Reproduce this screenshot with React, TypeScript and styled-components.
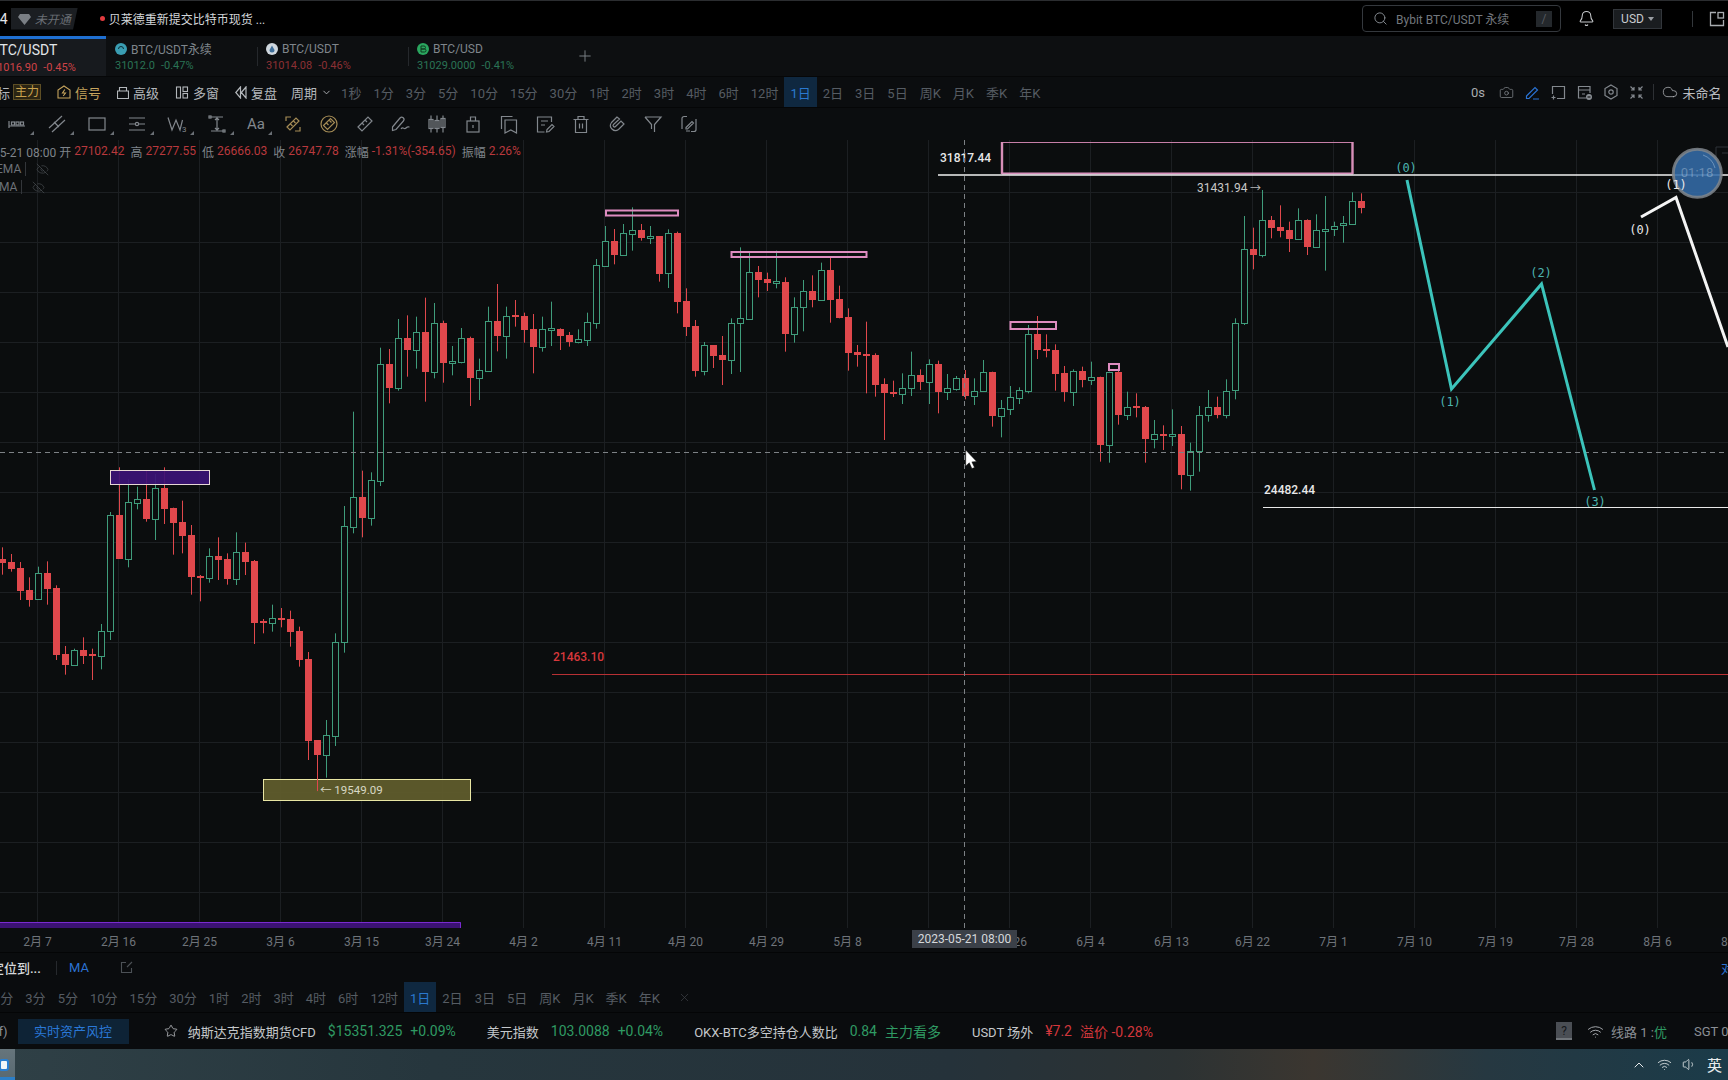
import React, { FC, ReactNode } from 'react'
import styled, { createGlobalStyle } from 'styled-components'
import { Bell, Camera, ChevronDown, ChevronUp, Cloud, EyeOff, Plus, Search, Star, Volume1, Wifi, X } from 'lucide-react'

const FONT = `Roboto, "Noto Sans CJK SC", sans-serif`
const RED = '#e0484c'
const GREEN = '#3f9c7b'
const PANEL = '#0b0d0f'

// candle rows are read off the chart: dir, wick high, body top, body bottom, wick low
// each set keeps the units of its own crop, so y = origin + v / 3
const SETS: { origin: number; rows: string }[] = [
  {
    origin: 440,
    rows: `r 322 357 369 404|r 342 367 387 395|r 366 385 453 480|r 412 451 480 500|g 380 400 478 478|r 364 400 446 494|r 436 445 645 660|r 618 643 675 704|g 626 631 675 675|r 592 631 648 672|r 626 643 648 720|g 552 574 647 688|g 216 226 574 600|r 82 226 357 357|g 118 187 356 382|g 140 178 188 208|r 92 178 237 245|g 102 145 236 300|r 82 145 207 252|r 203 204 249 344|r 182 247 288 340|r 255 286 411 464|r 405 408 414 484|g 325 349 413 428|r 292 349 360 420|r 340 358 417 434|g 277 337 416 435|r 308 337 366 405|r 360 364 548 612|r 537 543 549 580|g 494 535 548 575|r 504 535 539 562|r 512 537 576 620|r 560 574 660 680|r 636 657 903 960|r 900 900 945 1055|g 840 886 945 1013|g 580 607 887 918|g 198 259 607 638|g -85 172 260 280|r 92 172 234 292|g 97 121 233 257`,
  },
  {
    origin: 190,
    rows: `g 473 523 872 888|r 477 522 594 640|g 387 445 594 602|r 376 445 480 560|g 380 427 480 536|r 323 427 546 635|g 339 400 546 565|r 392 400 519 578|g 468 514 518 556|g 414 445 516 520|r 440 445 564 648|g 506 541 564 630|g 350 393 543 545|r 282 393 438 484|g 350 379 438 506|r 330 375 381 410|r 368 379 420 458|r 372 418 471 550|g 380 418 471 485|g 335 415 419 468|r 415 418 438 480|r 426 435 456 470|g 418 448 456 460|g 368 396 449 468|g 207 226 399 416|g 108 154 228 228|r 117 154 195 223|g 102 130 195 196|g 52 121 131 182|r 102 120 144 152|g 108 139 144 162|r 138 139 252 275|g 118 130 250 294|r 125 130 336 370|r 295 334 411 438|r 390 408 543 560|g 456 466 543 556|r 465 466 498 534|r 438 495 510 585|g 385 400 510 552|g 172 385 400 546|g 185 247 386 386|r 228 247 270 322|r 248 267 278 303|g 182 273 278 295|r 262 277 432 485|g 322 352 431 458|g 270 304 352 424|r 256 304 330 352`,
  },
  {
    origin: 230,
    rows: `g 98 121 210 212|r 80 121 210 278|r 167 208 264 265`,
  },
  {
    origin: 300,
    rows: `r 25 52 158 212|r 135 157 164 200|r 65 162 167 280|r 160 165 255 290|r 235 252 279 420|r 242 277 282 291|g 220 263 282 312|g 155 226 263 288|r 208 226 246 270|g 178 193 245 312|r 182 193 276 340|g 222 265 275 300|g 228 235 266 272|r 210 235 288 298|g 235 272 288 315|g 180 217 272 275|r 215 217 348 380|g 300 325 348 412|g 258 292 326 345|g 262 271 293 312|g 75 103 272 280|r 48 103 150 177|r 103 148 153 172|r 133 151 221 272|r 198 219 276 305|g 208 214 275 318|r 200 213 240 262|g 185 232 239 255|r 230 232 435 485|g 215 217 434 488|r 190 217 345 374|g 275 320 344 360|r 280 319 323 352|r 318 322 417 488|g 360 403 416 445|r 376 403 408 450|g 328 403 407 438|r 378 403 525 568|g 428 452 524 572|g 318 344 452 515|g 270 320 344 365|r 290 320 344 355|g 238 272 344 355|g 55 70 271 298`,
  },
  {
    origin: 130,
    rows: `g 258 358 580 585|r 293 357 375 418|g 180 271 374 382|r 258 271 294 325|r 226 291 302 322|r 275 301 326 366|g 235 271 326 326|r 268 271 350 375|g 253 301 350 350|g 198 298 301 422|g 275 287 298 318|g 258 280 286 338|g 187 214 281 285|r 190 214 233 250`,
  },
]

const CANDLES = SETS.flatMap(({ origin, rows }) =>
  rows.split('|').map(row => {
    const [dir, ...vals] = row.split(' ')
    const [high, top, bottom, low] = vals.map(v => origin + Number(v) / 3)
    return { up: dir === 'g', high, top, bottom, low }
  })
)

const GRID_X = Array.from({ length: 21 }, (_, i) => 37.5 + i * 81)
const GRID_Y = Array.from({ length: 15 }, (_, i) => 192.5 + i * 50)

// the 5月 17 slot stays empty, the crosshair tag sits on it
const AXIS = ['2月 7', '2月 16', '2月 25', '3月 6', '3月 15', '3月 24', '4月 2', '4月 11', '4月 20', '4月 29', '5月 8', '', '5月 26', '6月 4', '6月 13', '6月 22', '7月 1', '7月 10', '7月 19', '7月 28', '8月 6', '8月 15']
const PERIODS = ['1分', '3分', '5分', '10分', '15分', '30分', '1时', '2时', '3时', '4时', '6时', '12时', '1日', '2日', '3日', '5日', '周K', '月K', '季K', '年K']

const GlobalStyle = createGlobalStyle`
  html, body {
    margin: 0;
    background: #000;
    overflow: hidden;
  }
`

const Page = styled.div`
  display: flex;
  flex-direction: column;
  width: 1728px;
  height: 1080px;
  overflow: hidden;
  background: ${PANEL};
  color: #9a9fa5;
  font-family: ${FONT};
  font-size: 13px;
`

const TopBar = styled.header`
  flex: 0 0 36px;
  box-sizing: border-box;
  display: flex;
  align-items: center;
  background: #000;
  border-top: 1px solid #2b2d30;
`

const Clipped = styled.span`
  margin-left: -8px;
  color: #e4e6e8;
  font-size: 14px;
`

const Membership = styled.div`
  display: flex;
  align-items: center;
  gap: 4px;
  margin-left: 3px;
  width: 67px;
  height: 22px;
  box-sizing: border-box;
  padding-left: 7px;
  background: #1b1e22;
  clip-path: polygon(0 0, 100% 0, 93% 100%, 0 100%);
  color: #6a6f75;
  font-style: italic;
  font-size: 12px;
`

const NewsDot = styled.i`
  width: 5px;
  height: 5px;
  margin-left: 22px;
  border-radius: 50%;
  background: #e23b3f;
`

const News = styled.span`
  margin-left: 4px;
  color: #d3d6d9;
  font-size: 12px;
`

const SearchBox = styled.div`
  display: flex;
  align-items: center;
  gap: 8px;
  box-sizing: border-box;
  width: 199px;
  height: 27px;
  margin-left: auto;
  padding: 0 8px 0 10px;
  border: 1px solid #34383d;
  border-radius: 4px;
  color: #72777d;
  font-size: 12px;
  svg { color: #8a8f95; }
`

const Kbd = styled.span`
  margin-left: auto;
  width: 16px;
  height: 16px;
  background: #24282c;
  color: #555a60;
  text-align: center;
  line-height: 16px;
`

const BellWrap = styled.span`
  display: flex;
  margin-left: 17px;
  color: #c5c8cb;
`

const Currency = styled.div`
  display: flex;
  align-items: center;
  justify-content: center;
  gap: 4px;
  width: 49px;
  height: 20px;
  box-sizing: border-box;
  margin-left: 18px;
  background: #1a1d20;
  border: 1px solid #32363b;
  color: #c8cbce;
  font-size: 12px;
  &::after {
    content: '';
    border: 3.5px solid transparent;
    border-top: 4px solid #9a9ea3;
    border-bottom: 0;
  }
`

const TopDivider = styled.i`
  width: 1px;
  height: 16px;
  margin-left: 30px;
  background: #33373b;
`

const LayoutMark = styled.svg`
  flex: none;
  margin: 0 3px 0 16px;
  color: #a8acb0;
`

const TabBar = styled.nav`
  flex: 0 0 41px;
  display: flex;
  background: #0d0f11;
  border-bottom: 1px solid #060708;
  box-sizing: border-box;
`

const Tab = styled.div<{ $active?: boolean }>`
  position: relative;
  box-sizing: border-box;
  flex: none;
  width: ${({ $active }) => ($active ? '115px' : '151px')};
  margin-left: ${({ $active }) => ($active ? '-9px' : '0')};
  padding: ${({ $active }) => ($active ? '3px 0 0 0' : '5px 0 0 9px')};
  background: ${({ $active }) => ($active ? '#171a1e' : 'transparent')};
  border-top: ${({ $active }) => ($active ? '3px solid #1f6fd0' : '0')};
  &:not(:first-child)::before {
    content: '';
    position: absolute;
    left: 0;
    top: 11px;
    height: 19px;
    width: 1px;
    background: #25282c;
  }
  &:nth-child(2)::before {
    display: none;
  }
`

const TabName = styled.div<{ $active?: boolean }>`
  display: flex;
  align-items: center;
  gap: 4px;
  height: 15px;
  color: ${({ $active }) => ($active ? '#e2e5e8' : '#7f858b')};
  font-size: ${({ $active }) => ($active ? '14px' : '12px')};
`

const TabQuote = styled.div<{ $up?: boolean; $active?: boolean }>`
  display: flex;
  gap: 6px;
  margin-top: ${({ $active }) => ($active ? '4px' : '3px')};
  color: ${({ $up, $active }) => ($active ? '#cf4347' : $up ? '#2a7355' : '#8c3034')};
  font-size: 11px;
`

const AddTab = styled.span`
  display: flex;
  align-items: center;
  margin-left: 17px;
  color: #7a7f85;
`

const PeriodBar = styled.div`
  flex: 0 0 31px;
  box-sizing: border-box;
  display: flex;
  align-items: center;
  gap: 16px;
  background: #0b0d0f;
  border-bottom: 1px solid #050607;
`

const IndicatorLabel = styled.span`
  margin: 0 -13px 0 -16px;
  color: #b3b7bb;
`

const Badge = styled.span`
  box-sizing: border-box;
  width: 28px;
  height: 16px;
  background: #2b2513;
  border: 1px solid #5d4e24;
  color: #c9a24e;
  font-size: 12px;
  line-height: 14px;
  text-align: center;
`

const BarLink = styled.span<{ $gold?: boolean; $tight?: boolean }>`
  display: flex;
  align-items: center;
  gap: 4px;
  margin-left: ${({ $tight }) => ($tight ? '-2px' : '0')};
  color: ${({ $gold }) => ($gold ? '#c7a55d' : '#b3b7bb')};
  white-space: nowrap;
`

const PeriodList = styled.div<{ $offset: number }>`
  display: flex;
  align-items: center;
  height: 100%;
  margin-left: ${({ $offset }) => $offset}px;
`

const Period = styled.span<{ $active?: boolean }>`
  display: flex;
  align-items: center;
  height: 100%;
  padding: 0 6px;
  color: ${({ $active }) => ($active ? '#2a79cf' : '#565c63')};
  background: ${({ $active }) => ($active ? '#0f2840' : 'transparent')};
  white-space: nowrap;
`

const BarRight = styled.div`
  display: flex;
  align-items: center;
  margin-left: auto;
  color: #8a8f95;
  flex: none;
  width: 257px;
  height: 100%;
`

const Elapsed = styled.span`
  flex: none;
  width: 22.5px;
  color: #a8acb0;
`

const RightIcon = styled.span<{ $active?: boolean }>`
  flex: 0 0 26px;
  display: flex;
  justify-content: center;
  color: ${({ $active }) => ($active ? '#2a72d2' : '#83888e')};
`

const RightDivider = styled.i`
  flex: none;
  width: 1px;
  height: 16px;
  margin: 0 8px 0 3px;
  background: #2d3034;
`

const Workspace = styled.span`
  display: flex;
  align-items: center;
  gap: 5px;
  color: #b9bcc0;
  white-space: nowrap;
`

const ToolBar = styled.div`
  flex: 0 0 32px;
  display: flex;
  align-items: center;
  margin-left: -3px;
  background: #0b0d0f;
`

const ToolCell = styled.span<{ $width: number; $corner?: boolean; $gold?: boolean }>`
  position: relative;
  flex: 0 0 ${({ $width }) => $width}px;
  display: flex;
  justify-content: center;
  align-items: center;
  height: 100%;
  color: ${({ $gold }) => ($gold ? '#a58c56' : '#82878d')};
  &::after {
    content: '';
    display: ${({ $corner }) => ($corner ? 'block' : 'none')};
    position: absolute;
    right: 3px;
    bottom: 5px;
    border-bottom: 4px solid #6a6f75;
    border-left: 4px solid transparent;
  }
`

const ToolDigit = styled.text`
  font-family: ${FONT};
  font-size: 8px;
  fill: currentColor;
  stroke: none;
`

const AaMark = styled.text`
  font-family: ${FONT};
  font-size: 15px;
  fill: currentColor;
  stroke: none;
  text-anchor: middle;
`

const ChartArea = styled.main`
  position: relative;
  flex: 1;
  min-height: 0;
  overflow: hidden;
  background: #0b0d0e;
`

const ChartSvg = styled.svg`
  display: block;
`

const ChartText = styled.text<{ $color?: string; $mono?: boolean; $size?: number; $weight?: number }>`
  fill: ${({ $color }) => $color || '#e8e8e8'};
  font-family: ${({ $mono }) => ($mono ? `"DejaVu Sans Mono", monospace` : FONT)};
  font-size: ${({ $size }) => $size || 12}px;
  font-weight: ${({ $weight }) => $weight || 400};
  dominant-baseline: middle;
`

const Legend = styled.div`
  position: absolute;
  left: 0;
  top: 2px;
  font-size: 12px;
  color: #7f848a;
`

const LegendRow = styled.div`
  display: flex;
  align-items: center;
  gap: 3px;
  height: 18px;
  white-space: nowrap;
  margin-left: -7px;
`

const LegendValue = styled.span`
  margin-right: 3px;
  color: #b9393d;
`

const StudyRow = styled.div`
  display: flex;
  align-items: center;
  height: 18px;
  margin-left: -4px;
  color: #6d7278;
  svg { margin-left: 10px; color: #4c5055; }
  span { padding-right: 4px; border-right: 1px solid #33363a; }
`

const TimeAxis = styled.div`
  position: relative;
  flex: 0 0 25px;
  box-sizing: border-box;
  display: flex;
  align-items: center;
  margin-left: -3px;
  background: #0b0d0f;
  border-bottom: 1px solid #040506;
  font-size: 12px;
`

const AxisLabel = styled.span`
  flex: 0 0 81px;
  text-align: center;
  color: #6f747a;
  white-space: nowrap;
`

const CrossTag = styled.span`
  position: absolute;
  left: 915px;
  top: 2px;
  box-sizing: border-box;
  width: 105px;
  height: 18px;
  background: #3b4048;
  color: #d6d8db;
  line-height: 18px;
  text-align: center;
`

const StudyBar = styled.div`
  flex: 0 0 29px;
  display: flex;
  align-items: center;
  background: #0a0c0e;
`

const Locate = styled.span`
  width: 59px;
  margin-left: -9px;
  color: #d5d8db;
  font-weight: 500;
  white-space: nowrap;
`

const ThinDivider = styled.i`
  width: 1px;
  height: 14px;
  margin: 0 12px 0 6px;
  background: #26292d;
`

const StudyName = styled.span`
  color: #2a72d2;
  margin-right: 31px;
`

const SideLink = styled.span`
  margin-left: auto;
  margin-right: -6px;
  color: #2a72d2;
`

const StudyPeriods = styled.div`
  flex: 0 0 30px;
  display: flex;
  align-items: center;
  background: #0a0c0e;
  svg { margin-left: 12px; color: #3e4247; }
`

const StatusBar = styled.footer`
  flex: 0 0 37px;
  box-sizing: border-box;
  display: flex;
  align-items: center;
  background: #0a0c0e;
  border-top: 1px solid #040506;
  color: #c5c8cb;
`

const ClippedNote = styled.span`
  margin-left: -6px;
  color: #8a8f95;
`

const RiskButton = styled.span`
  box-sizing: border-box;
  flex: none;
  width: 111px;
  height: 25px;
  margin: 0 35px 0 10px;
  background: #0e2336;
  color: #2a78d6;
  line-height: 25px;
  text-align: center;
`

const Tickers = styled.div`
  display: flex;
  align-items: center;
  gap: 31px;
`

const Ticker = styled.div`
  display: flex;
  align-items: center;
  gap: 12px;
  white-space: nowrap;
  svg { margin-right: -2px; }
`

const Quote = styled.span<{ $up?: boolean }>`
  color: ${({ $up }) => ($up ? '#2f9a63' : '#d2373c')};
  font-size: 14px;
  & + & {
    margin-left: -4px;
  }
`

const StatusRight = styled.div`
  flex: 0 0 172px;
  display: flex;
  align-items: center;
  margin-left: auto;
  overflow: hidden;
  color: #8a8f95;
  white-space: nowrap;
`

const HelpBox = styled.span`
  flex: none;
  width: 16px;
  height: 18px;
  background: #4a4e54;
  color: #15171a;
  font-size: 12px;
  line-height: 18px;
  text-align: center;
  border-bottom: 2px solid #70757a;
  box-sizing: border-box;
`

const WifiWrap = styled.span`
  display: flex;
  margin: 0 7px 0 15px;
  color: #aeb2b6;
`

const Good = styled.em`
  font-style: normal;
  color: #2f9a63;
`

const Zone = styled.span`
  margin-left: 27px;
`

const Taskbar = styled.div`
  flex: 0 0 31px;
  display: flex;
  align-items: center;
  background: linear-gradient(90deg, #2f4046 0%, #26363d 25%, #25323a 55%, #2c3233 68%, #3b3630 76%, #263841 86%, #1b3b49 100%);
  color: #e8ecee;
`

const StartTile = styled.div`
  flex: 0 0 15px;
  align-self: stretch;
  display: flex;
  align-items: center;
  background: linear-gradient(180deg, #66757c 0%, #5a6a72 90%, #2c7fc8 90%);
  overflow: hidden;
`

const StartMark = styled.i`
  width: 10px;
  height: 12px;
  margin-left: -1px;
  background: #f2f6f8;
  border: 2px solid #2a7fd0;
  box-sizing: border-box;
  border-radius: 3px;
`

const Tray = styled.div`
  display: flex;
  align-items: center;
  gap: 10px;
  margin-left: auto;
  margin-right: 6px;
  font-size: 15px;
`

type ToolDef = { draw: ReactNode; wide?: boolean; gold?: boolean; width?: number }

const TOOLS: ToolDef[] = [
  { wide: true, draw: <><path d="M2 7v7M2 12h16" /><rect x="4.5" y="8" width="3" height="3" /><rect x="9" y="8" width="3" height="3" /><rect x="13.5" y="8" width="3" height="3" /></> },
  { wide: true, draw: <path d="M2 14L15 2M5 18L18 6M7 8l5 5" /> },
  { wide: true, draw: <rect x="2" y="4" width="16" height="12" /> },
  { wide: true, draw: <><path d="M2 4h16M2 10h6M12 10h6M2 16h16" /><circle cx="10" cy="10" r="1.6" /></> },
  { wide: true, draw: <><path d="M1 3.5L5 16L9 6L13 16L15.5 6" /><ToolDigit x="15" y="18">3</ToolDigit></> },
  { wide: true, draw: <><path d="M4 3h12M10 3v14M4 17h12M8 6l2-2 2 2M8 14l2 2 2-2" /><rect x="2" y="2" width="2" height="2" /><rect x="16" y="16" width="2" height="2" /></> },
  { wide: true, width: 38, draw: <AaMark x="10" y="15">Aa</AaMark> },
  { gold: true, draw: <><path d="M3 7V3h5M17 13v4h-5" /><path d="M4 13l9-9 3 3-9 9zM7.5 10l2 2M10.5 7l2 2" /></> },
  { gold: true, draw: <><circle cx="10" cy="10" r="8" /><path d="M4.5 11.5l7-7 4 4-7 7zM7.5 9l2 2M10.5 6.5l2 2" /></> },
  { draw: <path d="M3 13L13 3l4 4L7 17zM7 9l2 2M10 6l2 2" /> },
  { draw: <path d="M1.5 13L9 4a2.2 2.2 0 0 1 3.4 3L5 15.5 1.5 16.5zM10 15c2-3 3 1 5-1s2-1 3.5-1" /> },
  { draw: <><path d="M4 1.5v17M10 1.5v17M16 1.5v17" /><rect x="2" y="5.5" width="4" height="9" /><rect x="8" y="6.5" width="4" height="8" /><rect x="14" y="4.5" width="4" height="9" /></> },
  { draw: <><rect x="4" y="7" width="12" height="11" /><path d="M7.5 7V3h5v4M10 11v3" /></> },
  { draw: <path d="M2.5 15V2.5h11M6 6h11.5v13l-5.7-3L6 19z" /> },
  { draw: <path d="M16.5 8V3h-14v15h7M6 7h7M6 11h4M11.5 18l.5-2.5 5-5 2 2-5 5z" /> },
  { draw: <path d="M2.5 5.5h15M7 5.5V2.5h6v3M4.5 5.5v13h11v-13M8.5 9.5v5M11.5 9.5v5" /> },
  { draw: <path d="M10 3L4.5 8.5a5 5 0 0 0 7 7L17 10l-3-3-5.5 5.5a1 1 0 0 1-2-2L12.5 5z" /> },
  { draw: <path d="M2 3h16l-6.5 7.5V18M2 3l6.5 7.5V15" /> },
  { draw: <path d="M8 2.5H5a2 2 0 0 0-2 2V15M12 17.5h3a2 2 0 0 0 2-2V5M7 13.5l6-6 1.5 1.5-6 6H7zM7 17h4" /> },
]

const ToolGlyph: FC<{ children: ReactNode }> = ({ children }) => (
  <svg width="20" height="20" viewBox="0 0 20 20" fill="none" stroke="currentColor" strokeWidth="1.2">
    {children}
  </svg>
)

const CoinIcon: FC<{ color: string; children?: ReactNode }> = ({ color, children }) => (
  <svg width="12" height="12" viewBox="0 0 12 12">
    <circle cx="6" cy="6" r="6" fill={color} />
    {children}
  </svg>
)

const Chart: FC = () => (
  <ChartSvg width="1728" height="788" viewBox="0 140 1728 788">
    {GRID_X.map(x => (
      <line key={x} x1={x} x2={x} y1="140" y2="928" stroke="#1c1f22" />
    ))}
    {GRID_Y.map(y => (
      <line key={y} x1="0" x2="1728" y1={y} y2={y} stroke="#1c1f22" />
    ))}

    {CANDLES.map((c, i) => {
      const x = 2.5 + i * 9
      const top = Math.round(c.top)
      const bottom = Math.max(Math.round(c.bottom), top + 2)
      const color = c.up ? GREEN : RED
      return (
        <g key={i}>
          <line x1={x} x2={x} y1={c.high} y2={c.low} stroke={color} />
          {c.up ? (
            <rect x={x - 3} y={top + 0.5} width="6" height={bottom - top} fill="#0b0d0e" stroke={color} />
          ) : (
            <rect x={x - 3.5} y={top} width="7" height={bottom - top} fill={color} />
          )}
        </g>
      )
    })}

    <rect x="110.5" y="470.5" width="99" height="14" fill="#3c1276" fillOpacity="0.92" stroke="#e6d6d4" />
    <rect x="263.5" y="779.5" width="207" height="21" fill="#5f5c2c" fillOpacity="0.95" stroke="#e9e6a4" />
    <line x1="317.5" x2="317.5" y1="779" y2="791" stroke={RED} />
    <ChartText x="320" y="791" $color="#d8d8c4" $size={11.5}>← 19549.09</ChartText>

    <rect x="0" y="922" width="461" height="6" fill="#3b1273" />
    <path d="M0 922.500H460.500V928" fill="none" stroke="#7a2ad0" />

    <g fill="none" stroke="#df8cc0" strokeWidth="2">
      <rect x="606" y="210.5" width="72" height="5" />
      <rect x="731.5" y="252" width="135" height="5" />
      <rect x="1010.5" y="322" width="45.5" height="7" />
      <rect x="1109" y="364" width="10" height="6" />
    </g>

    <path d="M1001.5 174V142.5H1352.5V174" fill="none" stroke="#c77fa8" strokeWidth="1" />
    <path d="M1002 142V174M1352.5 142V174" stroke="#d88fb8" strokeWidth="2.4" />
    <line x1="1002" x2="1353" y1="173.5" y2="173.5" stroke="#d890bc" strokeWidth="2" />
    <line x1="938" x2="1728" y1="175" y2="175" stroke="#f2f2f2" strokeWidth="1.4" />
    <ChartText x="940" y="159" $weight={500}>31817.44</ChartText>

    <ChartText x="1197" y="189" $color="#c8c8c8">31431.94</ChartText>
    <ChartText x="1250" y="189" $color="#b8b8b8" $size={11}>→</ChartText>

    <line x1="1263" x2="1728" y1="507.5" y2="507.5" stroke="#e8e8e8" strokeWidth="1.2" />
    <ChartText x="1264" y="491" $weight={500}>24482.44</ChartText>

    <line x1="552" x2="1728" y1="674.5" y2="674.5" stroke="#b83034" strokeWidth="1.2" />
    <ChartText x="553" y="658" $color="#d8383c" $weight={500}>21463.10</ChartText>

    <line x1="0" x2="1728" y1="452.5" y2="452.5" stroke="#7d8185" strokeDasharray="5 4" />
    <line x1="964.5" x2="964.5" y1="140" y2="928" stroke="#7d8185" strokeDasharray="5 4" />

    <path d="M1716 160V147H1728M1722 153H1728" fill="none" stroke="#2f3236" />

    {/* recording bubble, translucent over the line; the wave labels stay above it */}
    <circle cx="1697.3" cy="173.3" r="24" fill="#346ca8" fillOpacity="0.88" stroke="#80868c" strokeOpacity="0.85" strokeWidth="3" />
    <path d="M1703 155a19 19 0 0 1 12 13" fill="none" stroke="#a8c4e0" strokeOpacity="0.5" />
    <g textAnchor="middle">
      <ChartText x="1697" y="174" $color="rgba(220, 230, 240, 0.34)" $size={13}>01:18</ChartText>
    </g>

    <polyline points="1407,180 1451.5,389 1541.5,284 1594.5,490" fill="none" stroke="#3cc4bb" strokeWidth="3" />
    <polyline points="1641,217 1676,197.5 1728,347" fill="none" stroke="#f4f4f4" strokeWidth="3" />
    <g textAnchor="middle">
      <ChartText x="1406" y="168" $color="#4bb4b0" $mono $size={12}>(0)</ChartText>
      <ChartText x="1450" y="402" $color="#4bb4b0" $mono $size={12}>(1)</ChartText>
      <ChartText x="1541" y="273" $color="#4bb4b0" $mono $size={12}>(2)</ChartText>
      <ChartText x="1595" y="502.5" $color="#4bb4b0" $mono $size={12}>(3)</ChartText>
      <ChartText x="1640" y="230" $mono $size={12}>(0)</ChartText>
      <ChartText x="1676" y="185" $mono $size={12}>(1)</ChartText>
    </g>

    <path d="M965.7 450v16l3.6-3.2 2.6 5.8 2.6-1.1-2.6-5.6 4.7-.4z" fill="#fff" stroke="#111" strokeWidth="0.5" />
  </ChartSvg>
)

const App: FC = () => (
  <Page>
    <GlobalStyle />

    <TopBar>
      <Clipped>74</Clipped>
      <Membership>
        <svg width="13" height="12" viewBox="0 0 13 12"><path d="M2 1h9l2 3-6.500 8L0 4z" fill="#7a7f85" /></svg>
        未开通
      </Membership>
      <NewsDot />
      <News>贝莱德重新提交比特币现货 ...</News>
      <SearchBox>
        <Search size={15} strokeWidth={1.5} />
        Bybit BTC/USDT 永续
        <Kbd>/</Kbd>
      </SearchBox>
      <BellWrap><Bell size={17} strokeWidth={1.5} /></BellWrap>
      <Currency>USD</Currency>
      <TopDivider />
      <LayoutMark width="16" height="16" viewBox="0 0 16 16" fill="none" stroke="currentColor" strokeWidth="1.3">
        <path d="M7 1.500H1.500v13h13V9" />
        <rect x="9" y="1.500" width="5.500" height="5.500" />
      </LayoutMark>
    </TopBar>

    <TabBar>
      <Tab $active>
        <TabName $active>BTC/USDT</TabName>
        <TabQuote $active><span>31016.90</span><span>-0.45%</span></TabQuote>
      </Tab>
      <Tab>
        <TabName>
          <CoinIcon color="#3a9db2"><path d="M3.500 6a2.500 2.500 0 0 1 5 0" fill="none" stroke="#0d2d36" /></CoinIcon>
          BTC/USDT永续
        </TabName>
        <TabQuote $up><span>31012.0</span><span>-0.47%</span></TabQuote>
      </Tab>
      <Tab>
        <TabName>
          <CoinIcon color="#cfd7de"><path d="M6 2.500 8.500 7a2.500 2.500 0 0 1-5 0z" fill="#3f6f9a" /></CoinIcon>
          BTC/USDT
        </TabName>
        <TabQuote><span>31014.08</span><span>-0.46%</span></TabQuote>
      </Tab>
      <Tab>
        <TabName>
          <CoinIcon color="#2aa65f"><path d="M4 3h3a1.500 1.500 0 0 1 0 3H4zM4 6h3.500a1.500 1.500 0 0 1 0 3H4z" fill="none" stroke="#0e3a20" /></CoinIcon>
          BTC/USD
        </TabName>
        <TabQuote $up><span>31029.0000</span><span>-0.41%</span></TabQuote>
      </Tab>
      <AddTab><Plus size={18} strokeWidth={1.3} /></AddTab>
    </TabBar>

    <PeriodBar>
      <IndicatorLabel>指标</IndicatorLabel>
      <Badge>主力</Badge>
      <BarLink $gold>
        <svg width="14" height="14" viewBox="0 0 14 14" fill="none" stroke="currentColor" strokeWidth="1.1">
          <path d="M7 1l6 4v8H1V5zM7.800 4.500 5.500 8h3l-2.300 3" />
        </svg>
        信号
      </BarLink>
      <BarLink>
        <svg width="12" height="13" viewBox="0 0 12 13" fill="none" stroke="currentColor" strokeWidth="1.1">
          <path d="M.5 5v7.500h11V5zM2.500 5V1.500h7V5" />
        </svg>
        高级
      </BarLink>
      <BarLink>
        <svg width="14" height="13" viewBox="0 0 14 13" fill="none" stroke="currentColor" strokeWidth="1.1">
          <rect x="1.500" y="1" width="4" height="11" />
          <rect x="8" y="1" width="4.500" height="4.500" />
          <rect x="8" y="7.500" width="4.500" height="4.500" />
        </svg>
        多窗
      </BarLink>
      <BarLink>
        <svg width="12" height="13" viewBox="0 0 12 13" fill="none" stroke="currentColor" strokeWidth="1.2">
          <path d="M5.500 1 .8 6.500 5.500 12zM11 1 6.300 6.500 11 12z" />
        </svg>
        复盘
      </BarLink>
      <BarLink $tight>
        周期
        <ChevronDown size={11} />
      </BarLink>
      <PeriodList $offset={-13}>
        {['1秒', ...PERIODS].map(p => (
          <Period key={p} $active={p === '1日'}>{p}</Period>
        ))}
      </PeriodList>
      <BarRight>
        <Elapsed>0s</Elapsed>
        <RightIcon><Camera size={15} strokeWidth={1.2} /></RightIcon>
        <RightIcon $active>
          <svg width="15" height="15" viewBox="0 0 15 15" fill="none" stroke="currentColor" strokeWidth="1.2">
            <path d="M1.500 11 10 2.500l2.500 2.500L4 13.500H1.500zM8 14h6" />
          </svg>
        </RightIcon>
        <RightIcon>
          <svg width="15" height="15" viewBox="0 0 15 15" fill="none" stroke="currentColor" strokeWidth="1.2">
            <path d="M1.500 9V1.500h12v12H6M.5 12.500h4M2.500 10.500v4" />
          </svg>
        </RightIcon>
        <RightIcon>
          <svg width="15" height="15" viewBox="0 0 15 15" fill="none" stroke="currentColor" strokeWidth="1.2">
            <path d="M9 13H1.500V1.500H13V8M1.500 5h11.500M5 9h3" />
            <circle cx="12" cy="12" r="3" fill="#8a8f95" stroke="none" />
            <path d="M10.500 12h3" stroke="#111" />
          </svg>
        </RightIcon>
        <RightIcon>
          <svg width="16" height="16" viewBox="0 0 16 16" fill="none" stroke="currentColor" strokeWidth="1.2">
            <path d="M8 1 14 4.500v7L8 15 2 11.500v-7z" />
            <circle cx="8" cy="8" r="2.200" />
          </svg>
        </RightIcon>
        <RightIcon>
          <svg width="15" height="15" viewBox="0 0 15 15" fill="none" stroke="currentColor" strokeWidth="1.2">
            <path d="M1.500 1.500l3.500 3.500M5 2v3H2M13.500 1.500 10 5M10 2v3h3M1.500 13.500 5 10M5 13v-3H2M13.500 13.500 10 10M10 13v-3h3" />
          </svg>
        </RightIcon>
        <RightDivider />
        <Workspace>
          <Cloud size={16} strokeWidth={1.1} />
          未命名
          <ChevronDown size={11} />
        </Workspace>
      </BarRight>
    </PeriodBar>

    <ToolBar>
      {TOOLS.map((tool, i) => (
        <ToolCell key={i} $width={tool.width || (tool.wide ? 40 : 36)} $corner={tool.wide} $gold={tool.gold}>
          <ToolGlyph>{tool.draw}</ToolGlyph>
        </ToolCell>
      ))}
    </ToolBar>

    <ChartArea>
      <Chart />
      <Legend>
        <LegendRow>
          05-21 08:00&nbsp;开 <LegendValue>27102.42</LegendValue>
          高 <LegendValue>27277.55</LegendValue>
          低 <LegendValue>26666.03</LegendValue>
          收 <LegendValue>26747.78</LegendValue>
          涨幅 <LegendValue>-1.31%(-354.65)</LegendValue>
          振幅 <LegendValue>2.26%</LegendValue>
        </LegendRow>
        <StudyRow><span>EMA</span><EyeOff size={13} strokeWidth={1.2} /></StudyRow>
        <StudyRow><span>&nbsp;MA</span><EyeOff size={13} strokeWidth={1.2} /></StudyRow>
      </Legend>
    </ChartArea>

    <TimeAxis>
      {AXIS.map((label, i) => (
        <AxisLabel key={i}>{label}</AxisLabel>
      ))}
      <CrossTag>2023-05-21 08:00</CrossTag>
    </TimeAxis>

    <StudyBar>
      <Locate>定位到...</Locate>
      <ThinDivider />
      <StudyName>MA</StudyName>
      <svg width="13" height="13" viewBox="0 0 13 13" fill="none" stroke="#4c5156" strokeWidth="1.1">
        <path d="M6 1.500H1.500v10h10V7M7 6l5-5" />
      </svg>
      <SideLink>对</SideLink>
    </StudyBar>

    <StudyPeriods>
      <PeriodList $offset={-13}>
        {PERIODS.map(p => (
          <Period key={p} $active={p === '1日'}>{p}</Period>
        ))}
      </PeriodList>
      <X size={13} strokeWidth={1.3} />
    </StudyPeriods>

    <StatusBar>
      <ClippedNote>(f)</ClippedNote>
      <RiskButton>实时资产风控</RiskButton>
      <Tickers>
        <Ticker>
          <Star size={14} strokeWidth={1.3} />
          纳斯达克指数期货CFD
          <Quote $up>$15351.325</Quote>
          <Quote $up>+0.09%</Quote>
        </Ticker>
        <Ticker>
          美元指数
          <Quote $up>103.0088</Quote>
          <Quote $up>+0.04%</Quote>
        </Ticker>
        <Ticker>
          OKX-BTC多空持仓人数比
          <Quote $up>0.84</Quote>
          <Quote $up>主力看多</Quote>
        </Ticker>
        <Ticker>
          USDT 场外
          <Quote>¥7.2</Quote>
          <Quote>溢价 -0.28%</Quote>
        </Ticker>
      </Tickers>
      <StatusRight>
        <HelpBox>?</HelpBox>
        <WifiWrap><Wifi size={17} strokeWidth={1.3} /></WifiWrap>
        线路 1 : <Good>优</Good>
        <Zone>SGT 09:18</Zone>
      </StatusRight>
    </StatusBar>

    <Taskbar>
      <StartTile><StartMark /></StartTile>
      <Tray>
        <ChevronUp size={16} strokeWidth={1.5} />
        <Wifi size={15} strokeWidth={1.3} />
        <Volume1 size={15} strokeWidth={1.3} />
        英
      </Tray>
    </Taskbar>
  </Page>
)

export default App
